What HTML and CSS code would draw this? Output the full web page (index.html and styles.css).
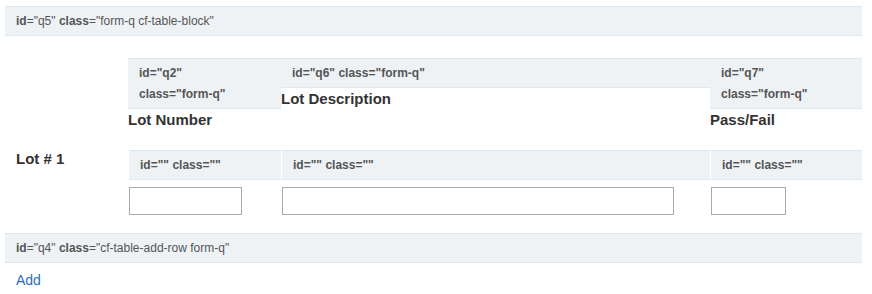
FILE: index.html
```html
<!DOCTYPE html>
<html>
<head>
  <title>Lot Table</title>
  <link rel="stylesheet" href="styles.css">
</head>
<body>
  <div class="page">
    <div class="q-bar"><b>id</b>="q5" <b>class</b>="form-q cf-table-block"</div>

    <div class="cf-table">
      <div class="corner"></div>
      <div class="col-head">
        <div class="q-tag"><span class="attr">id="q2"</span> <span class="attr">class="form-q"</span></div>
        <div class="col-label">Lot Number</div>
      </div>
      <div class="col-head">
        <div class="q-tag"><span class="attr">id="q6"</span> <span class="attr">class="form-q"</span></div>
        <div class="col-label">Lot Description</div>
      </div>
      <div class="col-head">
        <div class="q-tag"><span class="attr">id="q7"</span> <span class="attr">class="form-q"</span></div>
        <div class="col-label">Pass/Fail</div>
      </div>

      <div class="row-label">Lot # 1</div>
      <div class="cell">
        <div class="q-tag">id="" class=""</div>
        <input type="text" class="field field-number">
      </div>
      <div class="cell">
        <div class="q-tag">id="" class=""</div>
        <input type="text" class="field field-desc">
      </div>
      <div class="cell">
        <div class="q-tag">id="" class=""</div>
        <input type="text" class="field field-pass">
      </div>
    </div>

    <div class="q-bar"><b>id</b>="q4" <b>class</b>="cf-table-add-row form-q"</div>
    <a class="add-link" href="#">Add</a>
  </div>
</body>
</html>
```

FILE: styles.css
```css
body {
  margin: 0;
  background-color: #ffffff;
  font-family: "Liberation Sans", Arial, sans-serif;
  color: #333333;
}

.page {
  padding: 6px 10px 0 5px;
}

.q-bar,
.q-tag {
  background-color: #eef2f5;
  border-top: 1px solid #dde7f0;
  border-bottom: 1px solid #dde7f0;
  padding: 4px 11px;
  font-size: 12px;
  line-height: 20px;
  color: #555555;
}

.q-bar b {
  font-weight: bold;
}

.q-tag {
  font-weight: bold;
  line-height: 21px;
  padding: 4px 11px 3px;
}

.attr {
  white-space: nowrap;
}

.cf-table {
  display: grid;
  grid-template-columns: 123px 153px 429px 152px;
  align-items: start;
  row-gap: 19px;
  margin: 22px 0 18px;
}

.col-label {
  font-size: 15px;
  font-weight: bold;
  line-height: 22px;
  color: #333333;
}

.row-label {
  padding-left: 11px;
  font-size: 15px;
  font-weight: bold;
  line-height: 17px;
}

.cell {
  margin-left: 1px;
}

.field {
  display: block;
  box-sizing: border-box;
  height: 28px;
  margin-top: 7px;
  border: 1px solid #aaaaaa;
  padding: 2px 4px;
  font-size: 13px;
}

.field-number {
  width: 113px;
}

.field-desc {
  width: 392px;
}

.field-pass {
  width: 75px;
}

.add-link {
  display: inline-block;
  margin: 7px 0 0 11px;
  font-size: 14px;
  line-height: 20px;
  color: #2a6ebb;
  text-decoration: none;
}
```
